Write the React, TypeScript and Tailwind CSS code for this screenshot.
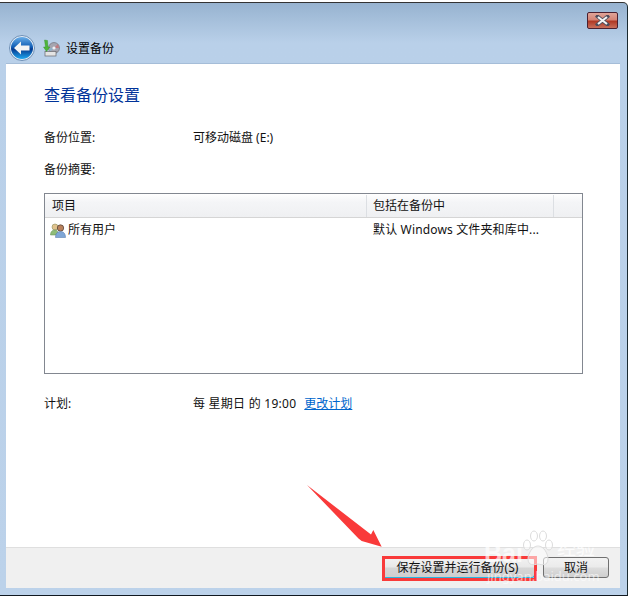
const fontStack = "font-['Noto_Sans','Noto_Sans_CJK_SC',sans-serif]";

function BackButton() {
  return (
    <svg width="26" height="26" viewBox="0 0 26 26">
      <defs>
        <linearGradient id="orb" x1="0" y1="0" x2="0" y2="1">
          <stop offset="0" stopColor="#6aaee8" />
          <stop offset="0.46" stopColor="#0f5cb4" />
          <stop offset="0.55" stopColor="#04398f" />
          <stop offset="1" stopColor="#1fa8f0" />
        </linearGradient>
      </defs>
      <circle cx="13" cy="13" r="12.5" fill="#e6eef7" stroke="#6d8fb5" />
      <circle cx="13" cy="13" r="11" fill="url(#orb)" />
      <path d="M5 13 L12 6.5 V10.5 H20.5 V15.5 H12 V19.5 Z" fill="#f4f4f4" />
    </svg>
  );
}

function BackupIcon() {
  return (
    <svg width="17" height="18" viewBox="0 0 17 18">
      <circle cx="11" cy="9" r="5.5" fill="#a5a5b0" stroke="#66666e" strokeWidth="0.6" />
      <path d="M11 9 L15 5 L16 9 Z" fill="#c07a80" />
      <path d="M11 9 L7 13 L6 9 Z" fill="#8fb0c8" />
      <circle cx="11" cy="9" r="1.6" fill="#f0f0f4" />
      <rect x="2" y="12.5" width="11" height="4.5" fill="#e4e4e4" stroke="#66666c" strokeWidth="0.7" />
      <path d="M1.5 1 L4.5 1.5 L5 8 H7 L3.5 12.5 L0.5 8 H2.5 Z" fill="#4fb53a" stroke="#2e8a25" strokeWidth="0.4" />
    </svg>
  );
}

function UsersIcon() {
  return (
    <svg width="16" height="15" viewBox="0 0 16 15">
      <circle cx="5" cy="4" r="3" fill="#e0c28e" stroke="#8f8f5a" strokeWidth="0.6" />
      <path d="M0.5 12 C0.5 8 3 7 5 7 C7 7 8 8 8 12 Z" fill="#8fbc78" stroke="#5f8a50" strokeWidth="0.5" />
      <circle cx="10.5" cy="5" r="3.2" fill="#b9815c" stroke="#4a3a30" strokeWidth="0.7" />
      <path d="M5.5 14.5 C5.5 10 8 8.5 10.5 8.5 C13 8.5 15.5 10 15.5 14.5 Z" fill="#7fa6d6" stroke="#4d73a6" strokeWidth="0.5" />
    </svg>
  );
}

function CloseButton() {
  return (
    <div className="w-[31px] h-[17px] rounded-[2px] border border-[#4a2030] bg-[linear-gradient(#e0a498_0%,#d58475_45%,#b03824_55%,#c9705c_100%)] flex items-center justify-center">
      <svg width="15" height="11" viewBox="0 0 15 11">
        <path d="M2.5 1.5 L12.5 9.5 M12.5 1.5 L2.5 9.5" stroke="#4d4d5c" strokeWidth="3.6" strokeLinecap="square" />
        <path d="M3 2 L12 9 M12 2 L3 9" stroke="#f4f4f4" strokeWidth="2.2" />
      </svg>
    </div>
  );
}

function InfoRow({ label, children, className }: { label: string; children?: React.ReactNode; className?: string }) {
  return (
    <div className={`flex items-center h-[18px] ${className ?? ""}`}>
      <div className="w-[149px]">{label}</div>
      <div className="flex items-center">{children}</div>
    </div>
  );
}

export default function App() {
  return (
    <div className={`relative w-[631px] h-[597px] bg-white overflow-hidden text-[12px] leading-[18px] text-[#111111] ${fontStack}`}>
      <div className="mt-[2px] w-[628px] h-[594px] border-t border-r border-b border-t-[#333333] border-r-[#1a2a30] border-b-[#101820] rounded-tr-[5px] flex flex-col bg-[linear-gradient(#97b3d0_0px,#b9d0e9_40px,#bcd2ea_100%)]">
        {/* Title bar */}
        <div className="h-[60px] shrink-0">
          <div className="h-[32px] flex justify-end pt-[9px] pr-[9px]">
            <CloseButton />
          </div>
          <div className="flex items-center pl-[9px] gap-[8px]">
            <BackButton />
            <BackupIcon />
            <span className="-ml-[2px] mt-[2px] text-black">设置备份</span>
          </div>
        </div>

        {/* Content panel */}
        <div className="ml-[6px] mr-[7px] h-[525px] bg-white border-t border-t-[#a5bdd8] flex flex-col">
          <div className="flex-1 pl-[38px] pr-[37px] pt-[18px]">
            <h1 className="text-[16px] leading-[26px] text-[#003399]">查看备份设置</h1>
            <InfoRow label="备份位置:" className="mt-[21px]">可移动磁盘 (E:)</InfoRow>
            <InfoRow label="备份摘要:" className="mt-[14px]" />

            {/* List */}
            <div className="mt-[14px] h-[181px] border border-[#828790]">
              <div className="flex h-[24px] pt-[1px] border-b border-b-[#d5d5d5] bg-[linear-gradient(#ffffff_0%,#f4f5f7_35%,#eff0f2_100%)] px-[1px]">
                <div className="w-[321px] pl-[6px] flex items-center border-r border-r-[#dcdfe3]">项目</div>
                <div className="w-[187px] pl-[6px] flex items-center border-r border-r-[#dcdfe3]">包括在备份中</div>
              </div>
              <div className="flex h-[24px] items-center">
                <div className="w-[322px] pl-[5px] flex items-center gap-[1px]">
                  <UsersIcon />
                  <span className="ml-[1px]">所有用户</span>
                </div>
                <div className="pl-[6px] tracking-[0.15px]">默认 Windows 文件夹和库中...</div>
              </div>
            </div>

            <InfoRow label="计划:" className="mt-[21px]">
              <span className="tracking-[0.25px]">每 星期日 的 19:00</span>
              <a className="ml-[8px] text-[#0066cc] underline">更改计划</a>
            </InfoRow>
          </div>

          {/* Footer */}
          <div className="h-[41px] shrink-0 border-t border-t-[#dfdfdf] bg-[#f0f0f0] flex items-center justify-end gap-[8px] pr-[11px] pb-[1px]">
            <button className="w-[153px] h-[21px] pr-[2px] rounded-[3px] border border-[#2a6f8f] border-b-[#29b6e0] border-r-[#29b6e0] bg-[linear-gradient(#f2f2f2_0%,#e8e8e8_48%,#d6d6d6_52%,#cfcfcf_100%)] text-center">
              保存设置并运行备份(S)
            </button>
            <button className="w-[66px] h-[21px] rounded-[3px] border border-[#707070] bg-[linear-gradient(#f2f2f2_0%,#ebebeb_48%,#dddddd_52%,#cfcfcf_100%)] text-center">
              取消
            </button>
          </div>
        </div>
      </div>

      {/* Annotation: red box */}
      <div className="absolute left-[382px] top-[556px] w-[155px] h-[25px] border-[3px] border-[#f93a3a]" />

      {/* Annotation: arrow */}
      <svg className="absolute left-[300px] top-[480px]" width="90" height="72" viewBox="0 0 90 72">
        <path d="M7 5 L71 54.5 L73.3 50 L81.7 66.7 L61.7 61 L58.5 58.5 Z" fill="#f93a3a" />
      </svg>

      {/* Watermark */}
      <span className="absolute left-[484px] top-[540px] font-['Liberation_Sans',sans-serif] font-bold text-[25px] leading-[26px] text-white/70">
        Bai
      </span>
      <svg className="absolute left-[522px] top-[530px]" width="32" height="40" viewBox="0 0 32 40">
        <g fill="#ffffff" fillOpacity="0.55" stroke="#dcdcdc" strokeWidth="1">
          <ellipse cx="5" cy="15" rx="3.5" ry="5" />
          <ellipse cx="12" cy="6" rx="3.5" ry="5" />
          <ellipse cx="21" cy="6" rx="3.5" ry="5" />
          <ellipse cx="27" cy="15" rx="3.5" ry="5" />
          <path d="M16 16 C10 16 6 24 6 29 C6 36 12 35 16 34 C20 35 26 36 26 29 C26 24 22 16 16 16 Z" />
        </g>
      </svg>
      <span className="absolute left-[557px] top-[539px] text-[19px] leading-[18px] text-white/80">经验</span>
      <span className="absolute left-[487px] top-[570px] text-[13px] leading-[13px] text-white/60">jingyan.baidu.com</span>
    </div>
  );
}
